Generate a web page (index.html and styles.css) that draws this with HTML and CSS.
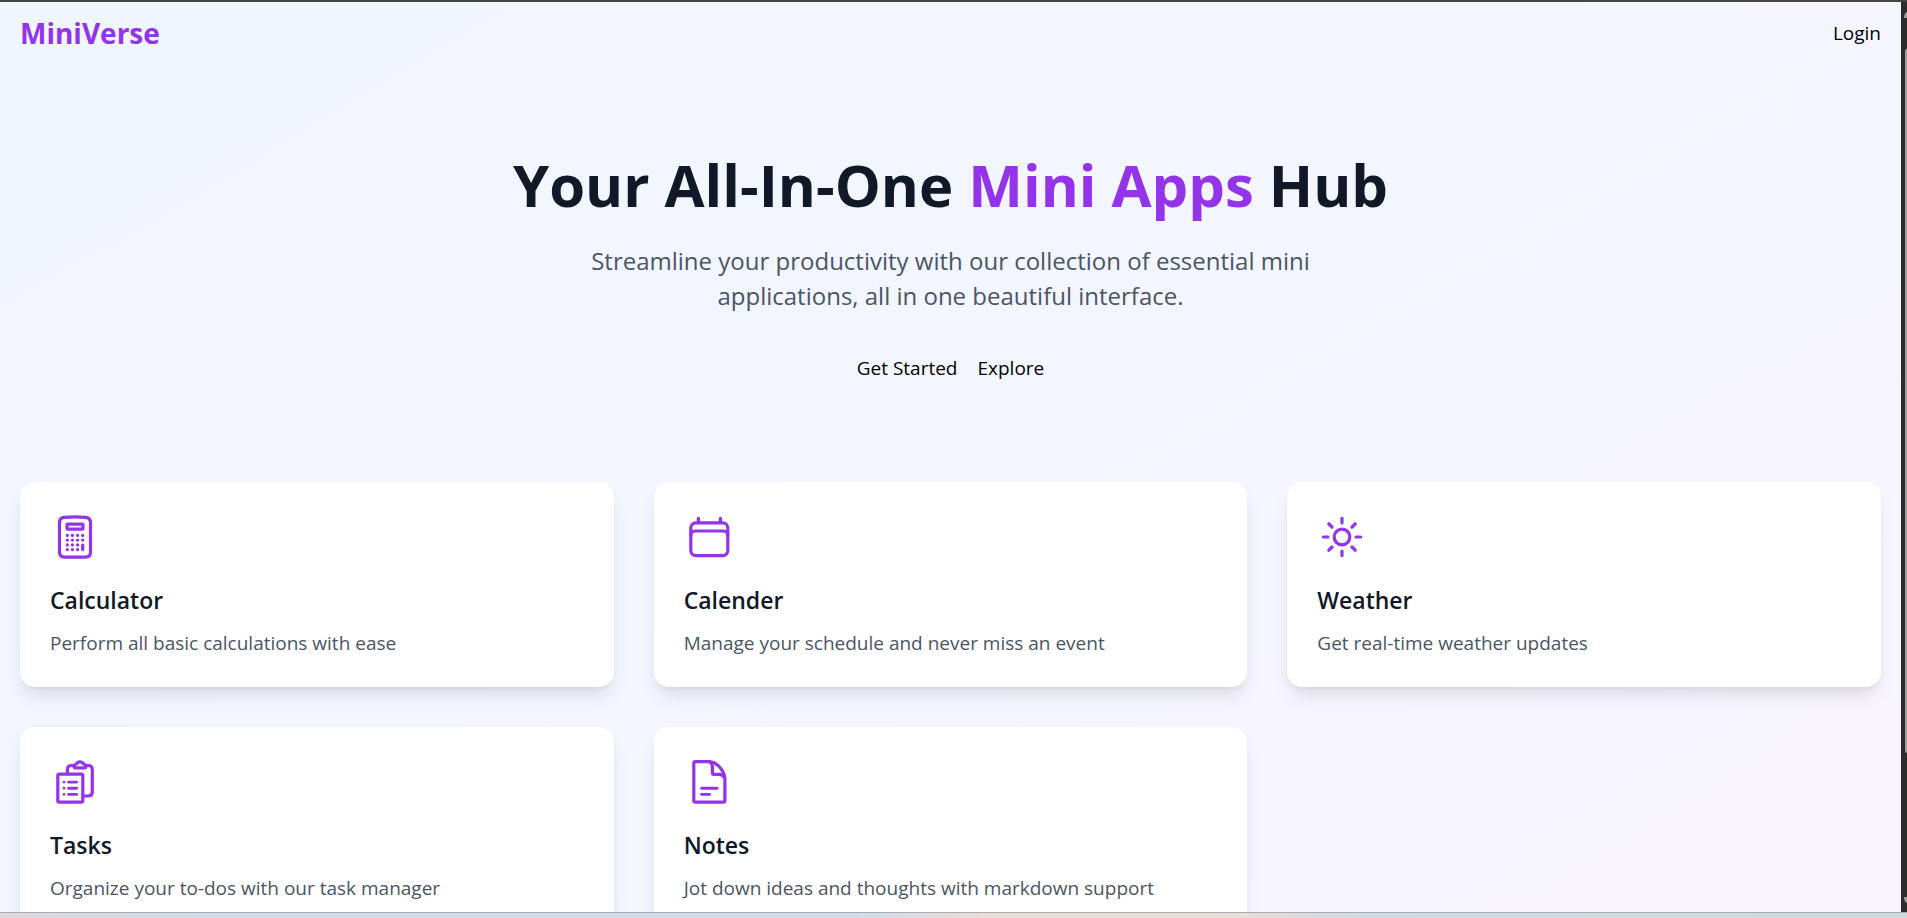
FILE: index.html
```html
<!DOCTYPE html>
<html lang="en">
<head>
<meta charset="utf-8">
<meta name="viewport" content="width=device-width, initial-scale=1">
<title>MiniVerse</title>
<link rel="stylesheet" href="styles.css">
</head>
<body>
<div class="viewport">
  <div class="page">
    <header class="navbar">
      <a class="logo" href="#">MiniVerse</a>
      <a class="link" href="#login">Login</a>
    </header>
    <main>
      <section class="hero">
        <h1 class="hero-title">Your All-In-One <span class="accent">Mini Apps</span> Hub</h1>
        <p class="hero-text">Streamline your productivity with our collection of essential mini applications, all in one beautiful interface.</p>
        <div class="actions">
          <button class="action" type="button">Get Started</button>
          <button class="action" type="button">Explore</button>
        </div>
      </section>
      <section class="cards">
        <article class="card">
          <svg class="icon" viewBox="0 0 50 50" aria-hidden="true">
            <path d="M9.5 10.5Q9.5 5.7 14.5 5.3Q25 4.6 35.5 5.3Q40.5 5.7 40.5 10.5V40Q40.5 45.2 35.5 45.2H14.5Q9.5 45.2 9.5 40Z"/>
            <rect x="17" y="12.2" width="16" height="5" rx="0.6"/>
            <path class="dots" d="M17.3 23.4h0M22.4 23.4h0M27.6 23.4h0M32.7 23.4h0M17.3 28.1h0M22.4 28.1h0M27.6 28.1h0M32.7 28.1h0M17.3 32.9h0M22.4 32.9h0M27.6 32.9h0M17.3 37.6h0M22.4 37.6h0M27.6 37.6h0M32.7 33.2V37.6"/>
          </svg>
          <h2 class="card-title">Calculator</h2>
          <p class="card-text">Perform all basic calculations with ease</p>
        </article>
        <article class="card">
          <svg class="icon" viewBox="0 0 50 50" aria-hidden="true">
            <rect x="6.8" y="10.8" width="37" height="32.8" rx="5"/>
            <path d="M14.4 6.3V10.5M36.4 6.3V10.5M6.8 23.5Q6.8 19 11.3 19H39.3Q43.8 19 43.8 23.5"/>
          </svg>
          <h2 class="card-title">Calender</h2>
          <p class="card-text">Manage your schedule and never miss an event</p>
        </article>
        <article class="card">
          <svg class="icon" viewBox="0 0 50 50" aria-hidden="true">
            <circle cx="25" cy="25" r="7.8"/>
            <path d="M25 6.4V11M25 39V43.6M6.4 25H11M39 25H43.6M11.8 11.8L15 15M35 35L38.2 38.2M38.2 11.8L35 15M15 35L11.8 38.2"/>
          </svg>
          <h2 class="card-title">Weather</h2>
          <p class="card-text">Get real-time weather updates</p>
        </article>
        <article class="card">
          <svg class="icon" viewBox="0 0 50 50" aria-hidden="true">
            <rect x="7.8" y="17.2" width="25" height="28" rx="1.6"/>
            <path d="M17.4 17V12.5Q17.4 8.5 21.4 8.5H24M36 8.5H38.3Q42.3 8.5 42.3 12.5V35Q42.3 39 38.3 39H33"/>
            <path d="M25.5 10.8Q23.8 10.8 24 9.2Q24.4 7.4 26.5 7Q27.5 4.8 30 4.8Q32.5 4.8 33.5 7Q35.6 7.4 36 9.2Q36.2 10.8 34.5 10.8Z"/>
            <path class="lines" d="M14 25.1h0M18.6 25.1h8M14 31.3h0M18.6 31.3h8M14 37.4h0M18.6 37.4h8"/>
          </svg>
          <h2 class="card-title">Tasks</h2>
          <p class="card-text">Organize your to-dos with our task manager</p>
        </article>
        <article class="card">
          <svg class="icon" viewBox="0 0 50 50" aria-hidden="true">
            <path d="M11.2 4.6H24Q31 4.8 35.6 10Q40.9 16 40.9 22.5V43.8Q40.9 45.2 39.5 45.2H11.2Q9.8 45.2 9.8 43.8V6Q9.8 4.6 11.2 4.6Z"/>
            <path d="M25.5 4.8Q28.4 6.3 28.4 9.5V16Q28.4 17.4 29.8 17.4H35Q39.2 17.4 40.7 21"/>
            <path class="lines" d="M17.6 31.3H33.2M17.6 37.4H25.6"/>
          </svg>
          <h2 class="card-title">Notes</h2>
          <p class="card-text">Jot down ideas and thoughts with markdown support</p>
        </article>
      </section>
    </main>
  </div>
  <div class="scrollbar" aria-hidden="true">
    <span class="arrow up"></span>
    <span class="thumb"></span>
    <span class="arrow down"></span>
  </div>
</div>
</body>
</html>
```
FILE: styles.css
```css
* {
  box-sizing: border-box;
  margin: 0;
}

body {
  height: 100vh;
  overflow: hidden;
  display: flex;
  flex-direction: column;
  font-family: "Open Sans", "Noto Sans", sans-serif;
  font-size: 19px;
  line-height: 30px;
  color: #000;
}

/* Window edges above and below the page */
body::before {
  content: "";
  flex: none;
  height: 2px;
  background: #444;
}

body::after {
  content: "";
  flex: none;
  height: 5px;
  border-top: 1px solid #a9adb3;
  background: linear-gradient(to right, #dcd8da, #d0dde8 12%, #d0dde8 45%, #ecdcd6 52%, #ecdcd6 64%, #d0dbe2 72%, #cfd9dc);
}

.viewport {
  flex: 1;
  min-height: 0;
  display: flex;
  overflow: hidden;
}

.page {
  flex: 1;
  align-self: flex-start;
  padding-bottom: 208px;
  background: linear-gradient(to bottom right, #eff6ff, #faf5ff);
}

.navbar {
  display: flex;
  justify-content: space-between;
  align-items: center;
  padding: 11px 20px;
}

.logo {
  font-size: 28px;
  line-height: 40px;
  font-weight: 700;
  color: #9333ea;
  text-decoration: none;
}

.link {
  color: inherit;
  text-decoration: none;
}

.hero {
  display: flex;
  flex-direction: column;
  align-items: center;
  padding: 91px 20px 99px;
  text-align: center;
}

.hero-title {
  font-size: 58px;
  line-height: 60px;
  font-weight: 700;
  color: #111827;
  margin-bottom: 28px;
}

.accent {
  color: #9333ea;
}

.hero-text {
  max-width: 760px;
  font-size: 24px;
  line-height: 35px;
  color: #4b5563;
  margin-bottom: 40px;
}

.actions {
  display: flex;
  gap: 20px;
}

.action {
  padding: 0;
  border: 0;
  background: none;
  font: inherit;
  color: inherit;
  cursor: pointer;
}

.cards {
  display: grid;
  grid-template-columns: repeat(3, 1fr);
  gap: 40px;
  padding: 0 20px;
}

.card {
  padding: 30px 30px 29px;
  border-radius: 15px;
  background: #fff;
  box-shadow: 0 12px 19px -4px rgba(0, 0, 0, 0.1), 0 5px 8px -5px rgba(0, 0, 0, 0.1);
}

.icon {
  display: block;
  width: 50px;
  height: 50px;
  margin-bottom: 21px;
  fill: none;
  stroke: #9333ea;
  stroke-width: 3.2;
  stroke-linecap: round;
  stroke-linejoin: round;
}

.dots {
  stroke-width: 3.3;
}

.lines {
  stroke-width: 2.9;
}

.card-title {
  font-size: 23px;
  line-height: 35px;
  font-weight: 600;
  color: #111827;
  margin-bottom: 10px;
}

.card-text {
  color: #4b5563;
}

.scrollbar {
  flex: none;
  width: 6px;
  padding: 10px 0 9px 3px;
  display: flex;
  flex-direction: column;
  align-items: flex-end;
  overflow: hidden;
  background: #2c2c2c;
}

.arrow {
  flex: none;
  width: 3px;
  height: 6px;
  background: #9f9f9f;
}

.up {
  border-top-left-radius: 3px 6px;
}

.down {
  border-bottom-left-radius: 3px 6px;
  margin-top: auto;
}

.thumb {
  flex: 0 0 79%;
  width: 2px;
  margin-top: 31px;
  border-radius: 2px 0 0 2px;
  background: #9f9f9f;
}
```
